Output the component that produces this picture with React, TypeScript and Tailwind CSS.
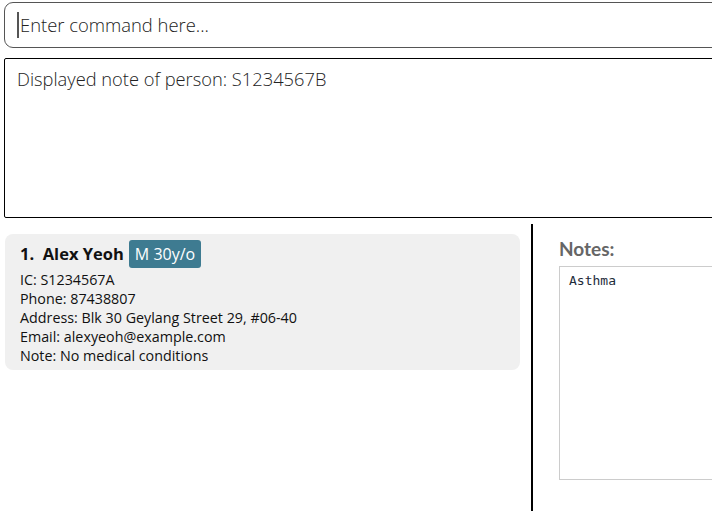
import { Fragment } from "react";

const person = {
  index: 1,
  name: "Alex Yeoh",
  badge: "M 30y/o",
  lines: [
    "IC: S1234567A",
    "Phone: 87438807",
    "Address: Blk 30 Geylang Street 29, #06-40",
    "Email: alexyeoh@example.com",
    "Note: No medical conditions",
  ],
};

function App() {
  return (
    <div className="h-[511px] w-[712px] overflow-hidden bg-white font-['Open_Sans',sans-serif] text-[#111]">
      {/* command box */}
      <div className="pl-1 pt-[2px]">
        <div className="flex h-[46px] w-[720px] items-center rounded-l-[9px] border border-[#555] pl-3">
          <span className="mr-[1px] h-[26px] w-[2px] bg-[#555]" />
          <span className="text-[18.4px] font-light text-[#222]">Enter command here...</span>
        </div>
      </div>

      {/* result display */}
      <div className="pl-1 pt-[10px]">
        <div className="h-[160px] w-[720px] rounded-[2px] border border-black px-3 pt-[6px]">
          <p className="text-[18.3px] font-light text-[#222]">Displayed note of person: S1234567B</p>
        </div>
      </div>

      {/* list + notes */}
      <div className="mt-[6px] flex h-[288px]">
        <div className="w-[531px] shrink-0 pl-[5px] pr-[11px] pt-[10px]">
          <div className="rounded-[8px] bg-[#f0f0f0] pb-[5px] pl-[15px] pt-[6px]">
            <div className="flex items-center gap-[5px]">
              <span className="text-[16.5px] font-bold text-[#111]">
                {person.index}.&nbsp;&nbsp;{person.name}
              </span>
              <span className="rounded-[3px] bg-[#3e7b91] px-[6px] py-[2px] text-[16px] text-white">{person.badge}</span>
            </div>
            <div className="mt-[2px] text-[14.3px] leading-[19px] text-[#111]">
              {person.lines.map((l) => (
                <Fragment key={l}>
                  <div>{l}</div>
                </Fragment>
              ))}
            </div>
          </div>
        </div>
        <div className="w-[2px] shrink-0 bg-black" />
        <div className="flex-1 pl-[26px] pt-[14px]">
          <h3 className="font-['Lato',sans-serif] text-[19px] font-bold leading-[22px] text-[#666]">Notes:</h3>
          <div className="mt-[6px] h-[214px] w-[200px] border border-[#ccc] px-[9px] pt-0">
            <span className="font-['DejaVu_Sans_Mono',monospace] text-[13px] text-[#1d2b3a]">Asthma</span>
          </div>
        </div>
      </div>
    </div>
  );
}

export default App;
